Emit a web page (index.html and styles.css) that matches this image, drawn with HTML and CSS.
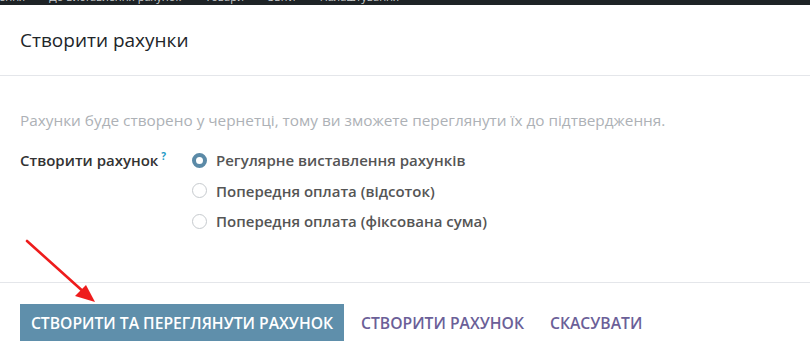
FILE: index.html
```html
<!DOCTYPE html>
<html lang="uk">
<head>
<meta charset="utf-8">
<link rel="stylesheet" href="styles.css">
</head>
<body>
<div class="page">
  <div class="topbar"><div class="topbar-text"><span>ення</span><span>До виставлення рахунок</span><span>Товари</span><span>Звіти</span><span>Налаштування</span></div></div>
  <div class="modal">
    <header class="modal-header">
      <h4 class="modal-title">Створити рахунки</h4>
    </header>
    <main class="modal-body">
      <p class="hint">Рахунки буде створено у чернетці, тому ви зможете переглянути їх до підтвердження.</p>
      <div class="field">
        <label class="field-label">Створити рахунок<sup class="help">?</sup></label>
        <div class="radios">
          <div class="radio checked"><span class="dot"></span><span>Регулярне виставлення рахунків</span></div>
          <div class="radio"><span class="dot"></span><span>Попередня оплата (відсоток)</span></div>
          <div class="radio"><span class="dot"></span><span>Попередня оплата (фіксована сума)</span></div>
        </div>
      </div>
    </main>
    <footer class="modal-footer">
      <button class="btn btn-primary">СТВОРИТИ ТА ПЕРЕГЛЯНУТИ РАХУНОК</button>
      <button class="btn btn-link">СТВОРИТИ РАХУНОК</button>
      <button class="btn btn-link">СКАСУВАТИ</button>
    </footer>
  </div>
  <svg class="arrow" width="110" height="80" viewBox="0 0 110 80">
    <line x1="27" y1="3" x2="86" y2="56" stroke="#ee1c1c" stroke-width="2.6" stroke-linecap="round"/>
    <polygon points="95,64 75,58 86,47" fill="#ee1c1c"/>
  </svg>
</div>
</body>
</html>
```
FILE: styles.css
```css
* { box-sizing: border-box; }
html, body { margin: 0; padding: 0; background: #fff; }
body { font-family: "Open Sans", "Noto Sans", sans-serif; color: #4c4c4c; }
.page { position: relative; width: 810px; height: 361px; overflow: hidden; }
.topbar { height: 5px; background: #1e2326; overflow: hidden; position: relative; }
.topbar-text { display: flex; gap: 24px; margin-top: -9px; margin-left: -1px; font-size: 11px; line-height: 12px; color: #c9ccce; white-space: nowrap; }
.modal { display: flex; flex-direction: column; }
.modal-header { height: 71px; border-bottom: 1px solid #e4e6ea; display: flex; align-items: center; padding: 0 20px 0; }
.modal-title { margin: 0; font-size: 19px; font-weight: 400; color: #212529; }
.modal-body { height: 207px; padding: 33px 20px 0; border-bottom: 1px solid #e4e6ea; }
.hint { margin: 0 0 17px; font-size: 15.35px; color: #adb1b6; line-height: 23px; }
.field { display: flex; }
.field-label { width: 172px; font-size: 15px; font-weight: 600; color: #333; line-height: 22px; }
.help { color: #1e9ac6; font-size: 10px; font-weight: 700; vertical-align: top; position: relative; top: -4px; margin-left: 3px; }
.radios { display: flex; flex-direction: column; gap: 8.5px; }
.radio { display: flex; align-items: center; gap: 9px; font-size: 15px; font-weight: 600; color: #555; line-height: 22px; }
.dot { width: 15px; height: 15px; border-radius: 50%; border: 1px solid #c6cace; background: #fff; flex: none; }
.radio.checked .dot { border: 4.5px solid #5b8aa7; }
.modal-footer { display: flex; align-items: center; padding: 21px 20px 0; }
.btn { font-family: inherit; font-size: 15.7px; font-weight: 600; border: 0; background: none; cursor: pointer; height: 37px; white-space: nowrap; }
.btn-primary { background: #5f8fab; color: #fff; padding: 0 10px; margin-right: 4px; width: 324px; }
.btn-link { color: #6b5f98; padding: 0 13px; }
.arrow { position: absolute; left: 0; top: 238px; }
```
